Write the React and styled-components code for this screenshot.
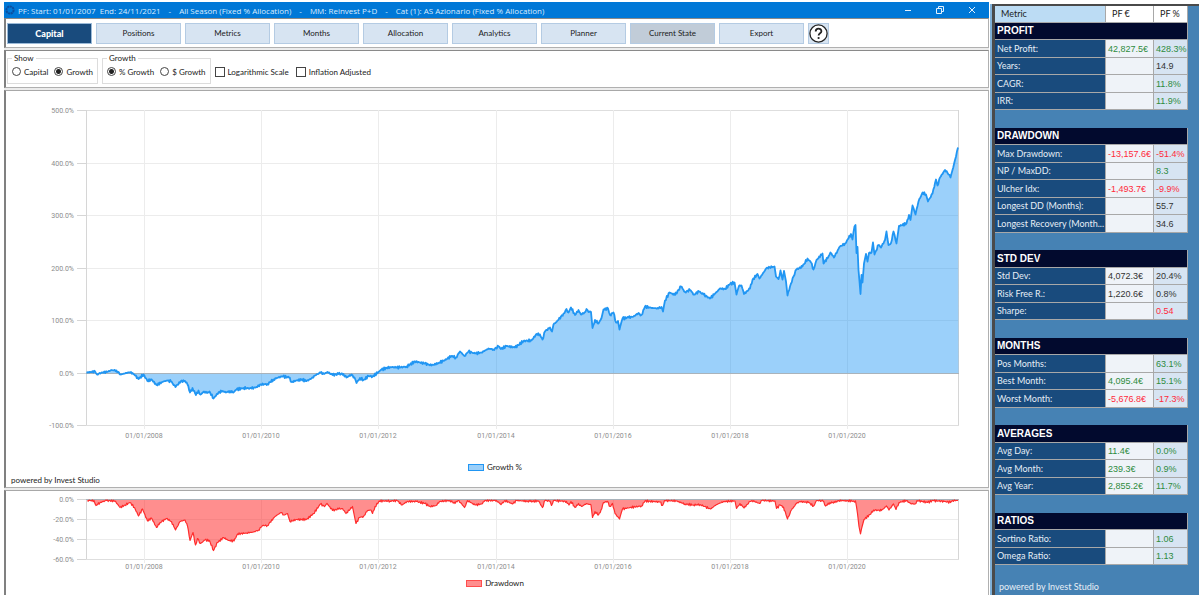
import React, { useState } from 'react';
import styled, { createGlobalStyle } from 'styled-components';

const GlobalStyle = createGlobalStyle`
    * {
        box-sizing: border-box;
    }
    body {
        margin: 0;
        background: #fff;
        font-family: Lato, "Liberation Sans", Arial, sans-serif;
        font-size: 8px;
        color: #222;
    }
`;

const Page = styled.div`
    display: grid;
    grid-template-columns: minmax(0, 1fr) 208px;
    column-gap: 3px;
    padding: 2px 0 4px 4px;
`;

const Main = styled.main`
    display: flex;
    flex-direction: column;
    gap: 2px;
    background: #ececec;
`;

const TitleBar = styled.header`
    display: flex;
    align-items: center;
    height: 16px;
    padding: 0 12px 0 1px;
    background: #0078d7;
    color: #d8ecff;
    font-family: "Open Sans", "Noto Sans", sans-serif;
    font-size: 8px;
    margin-bottom: -2px;
`;

const TitleText = styled.div`
    display: flex;
    flex: 1;
    align-items: center;
    gap: 8px;
    margin-left: 3px;
    white-space: pre;
`;

const WindowButton = styled.button`
    display: flex;
    align-items: center;
    justify-content: center;
    width: 32px;
    height: 16px;
    padding: 0;
    border: none;
    background: none;
    color: #e4f1fd;

    &:last-child {
        width: 10px;
        margin-left: 11px;
    }
`;

const Panel = styled.section`
    background: #fff;
    border: 1px solid #b0b0b0;
    border-top-color: ${props => props.$dark ? "#8a8a8a" : "#a8a8a8"};
    border-left: 2px solid #808080;
`;

const Toolbar = styled(Panel).attrs({ as: 'nav' })`
    display: flex;
    align-items: center;
    gap: 4px;
    height: 30px;
    padding-left: 1px;
`;

const TabButton = styled.button`
    width: 85px;
    height: 21px;
    padding: 0;
    font-family: inherit;
    font-size: ${props => props.$active ? "9px" : "8px"};
    font-weight: ${props => props.$active ? "900" : "normal"};
    color: ${props => props.$active ? "#fff" : "#222"};
    background: ${props => props.$active ? "#194b7d" : props.$current ? "#c1ccd8" : "#d7e4f2"};
    border: 1px solid ${props => props.$active ? "#9bbad8" : "#b4cbe3"};
`;

const HelpButton = styled(TabButton)`
    display: flex;
    align-items: center;
    justify-content: center;
    width: 21px;
`;

const Filters = styled(Panel)`
    display: flex;
    align-items: flex-start;
    gap: 4px;
    height: 38px;
    padding: 3px 1px;
`;

const Group = styled.fieldset`
    display: flex;
    align-items: center;
    gap: 6px;
    height: 30px;
    margin: 0;
    padding: 0 4px 2px 4px;
    border: 1px solid #dcdcdc;
`;

const GroupTitle = styled.legend`
    height: 8px;
    padding: 0 2px;
    line-height: 8px;
`;

const Option = styled.label`
    display: flex;
    align-items: center;
    gap: 3px;
    white-space: nowrap;
`;

const Checks = styled.div`
    display: flex;
    gap: 7px;
    padding-top: 13px;
`;

const Radio = styled.input`
    appearance: none;
    width: 9px;
    height: 9px;
    margin: 0;
    border: 1px solid #444;
    border-radius: 50%;

    &:checked {
        background: radial-gradient(circle, #222 2px, #fff 3px);
    }
`;

const CheckBox = styled.input`
    appearance: none;
    width: 10px;
    height: 10px;
    margin: 0;
    border: 1px solid #444;

    &:checked {
        background: #444;
    }
`;

const ChartPanel = styled(Panel)`
    display: flex;
    flex-direction: column;

    &:last-child {
        flex: 1;
        border-bottom: none;
        padding-bottom: 5px;
    }
`;

const Chart = styled.svg`
    display: block;
    width: 100%;
    height: auto;

    text {
        font-family: Roboto, "Liberation Sans", sans-serif;
        font-size: 7px;
        fill: #8c8c8c;
    }
`;

const Legend = styled.div`
    display: flex;
    align-items: center;
    justify-content: center;
    gap: 3px;
    height: 12px;
    padding-right: 4px;
`;

const Swatch = styled.span`
    width: 16px;
    height: 7px;
    background: ${props => props.$fill};
    border: 1px solid ${props => props.$line};
`;

const Powered = styled.footer`
    height: 14px;
    padding-left: 5px;
    line-height: 14px;
`;

const Sidebar = styled.aside`
    margin-top: 2px;
    margin-right: 1px;
    background: #4682b4;
    border-top: 2px solid #4a4a4a;
    border-left: 3px solid #4a4a4a;
    box-shadow: -2px 0 #7fb0d8;
`;

const MetricTable = styled.table`
    width: 193px;
    table-layout: fixed;
    border-collapse: separate;
    border-spacing: 0;
    font-size: 9px;

    tr {
        height: 17px;
    }
    tbody tr:nth-child(even) {
        height: 18px;
    }
    th, td {
        padding: 0 2px;
        line-height: 14px;
        text-align: left;
        font-weight: normal;
        white-space: nowrap;
        border-right: 1px solid #a8a8a8;
        border-bottom: 1px solid #a8a8a8;
    }
`;

const HeadCell = styled.th`
    background: ${props => props.$selected ? "#bcdcf4" : "#fff"};

    && {
        padding-left: 6px;
    }
`;

const SectionCell = styled.th`
    && {
        background: #020a2e;
        color: #fff;
        font-family: "Liberation Sans", Arial, sans-serif;
        font-weight: bold;
        font-size: 10px;
    }
`;

const NameCell = styled.th`
    background: #194b7d;
    color: #e6eef6;
`;

const tones = { up: "#2e8b3d", down: "#ff2a3a", flat: "#333" };

const ValueCell = styled.td`
    background: ${props => props.$percent ? "#d7e4f2" : "#eff3f8"};
    color: ${props => tones[props.$tone]};
    font-family: "Liberation Sans", Arial, sans-serif;
`;

const SpacerCell = styled.td`
    && {
        border: none;
    }
`;

const SidebarFooter = styled.footer`
    padding: 14px 4px 0;
    color: #e6eef6;
    font-size: 9px;
    line-height: 16px;
`;

const tabs = ["Capital", "Positions", "Metrics", "Months", "Allocation", "Analytics", "Planner", "Current State", "Export"];

const sections = [
    ["PROFIT", [
        ["Net Profit:", "42,827.5€", "428.3%", "up"],
        ["Years:", "", "14.9", "flat"],
        ["CAGR:", "", "11.8%", "up"],
        ["IRR:", "", "11.9%", "up"],
    ]],
    ["DRAWDOWN", [
        ["Max Drawdown:", "-13,157.6€", "-51.4%", "down"],
        ["NP / MaxDD:", "", "8.3", "up"],
        ["Ulcher Idx:", "-1,493.7€", "-9.9%", "down"],
        ["Longest DD (Months):", "", "55.7", "flat"],
        ["Longest Recovery (Month...", "", "34.6", "flat"],
    ]],
    ["STD DEV", [
        ["Std Dev:", "4,072.3€", "20.4%", "flat"],
        ["Risk Free R.:", "1,220.6€", "0.8%", "flat"],
        ["Sharpe:", "", "0.54", "down"],
    ]],
    ["MONTHS", [
        ["Pos Months:", "", "63.1%", "up"],
        ["Best Month:", "4,095.4€", "15.1%", "up"],
        ["Worst Month:", "-5,676.8€", "-17.3%", "down"],
    ]],
    ["AVERAGES", [
        ["Avg Day:", "11.4€", "0.0%", "up"],
        ["Avg Month:", "239.3€", "0.9%", "up"],
        ["Avg Year:", "2,855.2€", "11.7%", "up"],
    ]],
    ["RATIOS", [
        ["Sortino Ratio:", "", "1.06", "up"],
        ["Omega Ratio:", "", "1.13", "up"],
    ]],
];

const years = [[144, 2008], [261, 2010], [378, 2012], [496, 2014], [613, 2016], [730, 2018], [847, 2020]];

// chart points, "x,y" in drawing units
const growth = `86.5,372.5 95,371.5 97,374.5 101.5,372.5 107,372 111.5,370 116.5,370.5 120.5,374.5 126.5,373 131,372 135,375.5 138.5,379
143.5,374.5 147.5,381 151.5,379.5 156.5,385 163.5,381.5 167,380.5 171,381.5 175.5,387 181,381 185,381 187.5,384.5 190,392.5 192.5,388
196,395 198.5,390.5 200.5,394.5 204,391.5 207,393 209.5,391.5 213.5,398.5 218.5,392.5 222.5,391 226,392.5 230,391 233.5,392.5
236.5,389.5 243.5,388 251.5,388.5 256.5,387 261,384.5 267.5,384 273.5,379.5 279,377 283,376.5 289,377.5 291.5,382 296.5,380.5
301.5,379.5 306.5,381 311.5,378.5 315,375.5 320.5,372.5 324,374 327.5,372 332.5,375 338.5,374 343.5,374 346.5,377.5 351.5,374.5
354.5,377.5 356.5,383 360,378 363.5,380 368.5,376 372.5,376.5 378.5,372 381.5,369.5 390,367 400,367.5 406.5,366.5 415,361.5
425,363.5 431.5,365.5 438.5,363 445,360 451.5,356 456,357.5 460,351.5 464.5,356 468.5,351.5 475,353.5 481.5,352.5 488.5,348.5
493.5,349.5 498.5,346.5 501,349 506.5,346 515,347.5 523.5,341 531.5,340.5 536.5,334 540,334.5 542.5,339.5 545,331.5 550,327.5
552,331.5 553.5,324.5 558.5,320 563.5,313.5 566.5,309 568.5,312.5 571,307.5 575,315 578.5,310 581,314.5 584.5,312.5 586.5,309
588.5,312 591,312 592.5,328 595,320 598.5,323.5 601.5,318 603.5,309.5 608,308.5 610,315 613.5,312.5 616,322.5 618,321 619.5,329.5
622.5,318.5 628.5,317.5 633.5,316.5 638.5,313 641.5,315 645,306.5 651.5,308 658.5,308.5 661.5,307 663,311.5 665,300.5 669.5,292.5
675,295 681,286.5 685,292 690,290 694,294.5 699,291.5 703.5,294.5 710,298.5 716.5,292 720,288.5 725,289 730,284 734.5,282.5
736.5,294.5 739,286 741.5,285.5 744,294 750,288.5 752.5,280 757.5,274 759.5,278.5 766.5,268 774.5,266.5 776,276.5 778.5,279
780.5,270.5 782.5,279.5 784,271 786,281.5 787.5,295.5 790,286.5 793.5,276.5 796.5,269.5 802.5,266.5 807.5,258.5 811,262.5
813.5,269.5 816.5,260 822.5,253.5 823.5,263.5 828.5,256.5 830.5,252.5 834,257.5 839.5,247 845,243.5 848.5,238.5 851,234
852.5,239.5 854.5,226.5 855.5,225 856.5,253 857.5,247 858.5,270 860.5,294 861.5,275 862.5,282.5 864,263.5 866,254 867.5,261.5
869,253 871.5,252.5 873,242.5 874.5,254.5 878.5,245 881,247.5 885,240 886.5,231.5 888.5,245 891,243 893.5,231.5 896.5,243.5
899,226 906.5,223.5 909,215 910.5,220 912.5,205.5 915.5,214.5 918.5,201.5 922.5,192.5 926,194.5 928,201.5 932.5,193.5 936,179.5
937.5,185.5 940,177.5 945,170 947.5,173 950.5,177.5 952.5,170 955,160 958,147.5`;

const drawdown = `87.5,500.5 94,500.5 96,505.5 100,502.5 106.5,500.5 115,501 120,507.5 125,505 130,502.5 134.5,507.5 138.5,516 142.5,509
147.5,521 151.5,518 156.5,527.5 160,522.5 166.5,518.5 171.5,521.5 175.5,530 180,521.5 185,520 187.5,526 190,540.5 193,532.5
195.5,545 197.5,538.5 200.5,543.5 205,540 209.5,540.5 213.5,550.5 217.5,542.5 223.5,537.5 228.5,540.5 234,541 237.5,534 246.5,533
253.5,532 258.5,530 262.5,525.5 267.5,525.5 275,516.5 281,512.5 284,515 287.5,513.5 290,521.5 296.5,519.5 306.5,519.5 313.5,513.5
320.5,504 324.5,506.5 327,503.5 332.5,510.5 338.5,509 342.5,508.5 346,513.5 352.5,506.5 354,514 356,523.5 359.5,517.5 363.5,516.5
367.5,510.5 371,510 372.5,513.5 375,506.5 379.5,501 390,501 397,500.5 402,505 407,501.5 416.5,501.5 425,503.5 430,506.5 436,505.5
439.5,501.5 450,500.5 455,503.5 458,500.5 461.5,503.5 464.5,507.5 467.5,500.5 475,505 481.5,504 485,500.5 496.5,500.5 501,504.5
505,500.5 512.5,504 516.5,500.5 530,501.5 538.5,501 542.5,507.5 545,500.5 550,501 551.5,505.5 553.5,500.5 566.5,501.5 569,505
571,501.5 575,507.5 578.5,503.5 581.5,506.5 586.5,503.5 591,505 592.5,517.5 595,511.5 598.5,515 601,510 603.5,502.5 607.5,501.5
610,506.5 612.5,503.5 615,513.5 619.5,519 622.5,509 630,507.5 641.5,506 645,501 660,502 662.5,505.5 664.5,500.5 676.5,501 685,504
693.5,505 700,504.5 710.5,509 716.5,504.5 723.5,501.5 735,501 736.5,508.5 740,503.5 744,508 750,501.5 752,500.5 759.5,503.5
762,500.5 775,501 776.5,508.5 780,505 783.5,507 787.5,519 791.5,510 796.5,503.5 800,501.5 808.5,502.5 813.5,506 816.5,500.5
823,501 825.5,506 830,502.5 835,502.5 838.5,500.5 853.5,501 855.5,501 857.5,513.5 859,526.5 860.5,534 862.5,525 864,519.5
870,514.5 873.5,510 881.5,510.5 886.5,506 889,510 893.5,504 896,509.5 899,502.5 906.5,500.5 910.5,503.5 915,504 917,500.5
927.5,502.5 933,500.5 945,501.5 950.5,502.5 952.5,500.5 958,500.5`;

// Puts the small daily swings between the plotted points.
const addSwings = (data, size, top) => {
    const points = data.trim().split(/\s+/).map(p => p.split(",").map(Number));
    const out = [];
    points.forEach(([x, y], i) => {
        out.push(`${x},${y}`);
        const next = points[i + 1];
        if (!next) return;
        const steps = Math.floor((next[0] - x) / 0.8);
        for (let k = 1; k < steps; k++) {
            const t = k / steps;
            const px = x + (next[0] - x) * t;
            const swing = Math.sin(px * 7.3) * Math.cos(px * 3.1) * size;
            const py = Math.max(top, y + (next[1] - y) * t + swing);
            out.push(`${px.toFixed(1)},${py.toFixed(1)}`);
        }
    });
    return out.join(" ");
};

const PlotArea = ({ title, viewBox, rows, points, baseline, labelGap, fill, line, weight }) => {
    const top = rows[0][0];
    const bottom = rows[rows.length - 1][0];
    return (
        <Chart viewBox={viewBox} role="img" aria-label={title}>
            {rows.map(([y, label]) => (
                <g key={label}>
                    <path d={`M86 ${y + 0.5}H959`} stroke={y === top || y === bottom ? "#dedede" : "#ececec"} />
                    <path d={`M77 ${y + 0.5}H86`} stroke="#d6d6d6" />
                    <text x="74" y={y + 3} textAnchor="end">{label}</text>
                </g>
            ))}
            {years.map(([x, year]) => (
                <g key={year}>
                    <path d={`M${x + 0.5} ${top}V${bottom + 4}`} stroke="#ececec" />
                    <text x={x} y={bottom + labelGap} textAnchor="middle">01/01/{year}</text>
                </g>
            ))}
            <path d={`M86.5 ${top}V${bottom}M958.5 ${top}V${bottom}`} stroke="#d6d6d6" />
            <polygon points={`86.5,${baseline} ${points} 958.5,${baseline}`} fill={fill} />
            <path d={`M86 ${baseline}H959`} stroke="#a9b3bb" />
            <polyline points={points} fill="none" stroke={line} strokeWidth={weight} strokeLinejoin="round" />
        </Chart>
    );
};

const growthRows = [[110, "500.0%"], [163, "400.0%"], [215, "300.0%"], [268, "200.0%"], [320, "100.0%"], [373, "0.0%"], [425, "-100.0%"]];
const drawdownRows = [[499, "0.0%"], [519, "-20.0%"], [539, "-40.0%"], [559, "-60.0%"]];

const App = () => {
    const [show, setShow] = useState("Growth");
    const [unit, setUnit] = useState("% Growth");

    return (
        <>
            <GlobalStyle />
            <Page>
                <Main>
                    <TitleBar>
                        <svg width="10" height="10" viewBox="0 0 10 10">
                            <circle cx="5" cy="5" r="3.6" fill="none" stroke="#0a4fa0" strokeWidth="2" strokeDasharray="2.2 .5" />
                        </svg>
                        <TitleText>
                            <span>PF: Start: 01/01/2007  End: 24/11/2021</span>
                            <span>-</span>
                            <span>All Season (Fixed % Allocation)</span>
                            <span>-</span>
                            <span>MM: Reinvest P+D</span>
                            <span>-</span>
                            <span>Cat (1): AS Azionario (Fixed % Allocation)</span>
                        </TitleText>
                        <WindowButton aria-label="Minimize">
                            <svg width="8" height="8" viewBox="0 0 8 8"><path d="M1 4.5H7" stroke="currentColor" /></svg>
                        </WindowButton>
                        <WindowButton aria-label="Restore">
                            <svg width="8" height="8" viewBox="0 0 8 8" fill="none" stroke="currentColor"><path d="M.5 2.5H5.5V7.5H.5ZM2.5 2V.5H7.5V5.5H6" /></svg>
                        </WindowButton>
                        <WindowButton aria-label="Close">
                            <svg width="8" height="8" viewBox="0 0 8 8"><path d="M1 1L7 7M7 1L1 7" stroke="currentColor" /></svg>
                        </WindowButton>
                    </TitleBar>
                    <Toolbar $dark>
                        {tabs.map(tab => (
                            <TabButton key={tab} $active={tab === "Capital"} $current={tab === "Current State"}>{tab}</TabButton>
                        ))}
                        <HelpButton aria-label="Help">
                            <svg width="19" height="19" viewBox="0 0 19 19" fill="none" stroke="#222">
                                <circle cx="9.5" cy="9.5" r="8.6" fill="#fff" strokeWidth="1.3" />
                                <path d="M6.7 7.4C6.7 3.6 12.4 3.7 12.4 7.2C12.4 9.3 9.6 9.3 9.6 11.6" strokeWidth="1.8" />
                                <circle cx="9.6" cy="14" r="1.1" fill="#222" stroke="none" />
                            </svg>
                        </HelpButton>
                    </Toolbar>
                    <Filters $dark>
                        <Group>
                            <GroupTitle>Show</GroupTitle>
                            {["Capital", "Growth"].map(name => (
                                <Option key={name}>
                                    <Radio type="radio" name="show" checked={show === name} onChange={() => setShow(name)} />
                                    {name}
                                </Option>
                            ))}
                        </Group>
                        <Group>
                            <GroupTitle>Growth</GroupTitle>
                            {["% Growth", "$ Growth"].map(name => (
                                <Option key={name}>
                                    <Radio type="radio" name="unit" checked={unit === name} onChange={() => setUnit(name)} />
                                    {name}
                                </Option>
                            ))}
                        </Group>
                        <Checks>
                            <Option><CheckBox type="checkbox" />Logarithmic Scale</Option>
                            <Option><CheckBox type="checkbox" />Inflation Adjusted</Option>
                        </Checks>
                    </Filters>
                    <ChartPanel>
                        <PlotArea
                            title="Growth %"
                            viewBox="6 91 982 370"
                            rows={growthRows}
                            points={addSwings(growth, 1.4, 0)}
                            baseline={373.5}
                            labelGap={13}
                            fill="rgba(33, 150, 243, 0.45)"
                            line="#2196f3"
                            weight={1.8}
                        />
                        <Legend><Swatch $fill="#9bcff9" $line="#2196f3" />Growth %</Legend>
                        <Powered>powered by Invest Studio</Powered>
                    </ChartPanel>
                    <ChartPanel>
                        <PlotArea
                            title="Drawdown"
                            viewBox="6 491 982 86"
                            rows={drawdownRows}
                            points={addSwings(drawdown, 1.2, 500)}
                            baseline={499.5}
                            labelGap={10}
                            fill="rgba(255, 30, 30, 0.5)"
                            line="#ff2d2d"
                            weight={1.2}
                        />
                        <Legend><Swatch $fill="#ff8e8e" $line="#ff4d4d" />Drawdown</Legend>
                    </ChartPanel>
                </Main>
                <Sidebar>
                    <MetricTable>
                        <colgroup>
                            <col width="111" />
                            <col width="48" />
                            <col width="34" />
                        </colgroup>
                        <thead>
                            <tr>
                                <HeadCell $selected>Metric</HeadCell>
                                <HeadCell>PF €</HeadCell>
                                <HeadCell>PF %</HeadCell>
                            </tr>
                        </thead>
                        <tbody>
                            {sections.map(([name, metrics], i) => (
                                <React.Fragment key={name}>
                                    {i > 0 && <tr><SpacerCell colSpan={3} /></tr>}
                                    <tr><SectionCell colSpan={3}>{name}</SectionCell></tr>
                                    {metrics.map(([label, amount, percent, tone]) => (
                                        <tr key={label}>
                                            <NameCell scope="row">{label}</NameCell>
                                            <ValueCell $tone={tone}>{amount}</ValueCell>
                                            <ValueCell $tone={tone} $percent>{percent}</ValueCell>
                                        </tr>
                                    ))}
                                </React.Fragment>
                            ))}
                        </tbody>
                    </MetricTable>
                    <SidebarFooter>powered by Invest Studio</SidebarFooter>
                </Sidebar>
            </Page>
        </>
    );
};

export default App;
